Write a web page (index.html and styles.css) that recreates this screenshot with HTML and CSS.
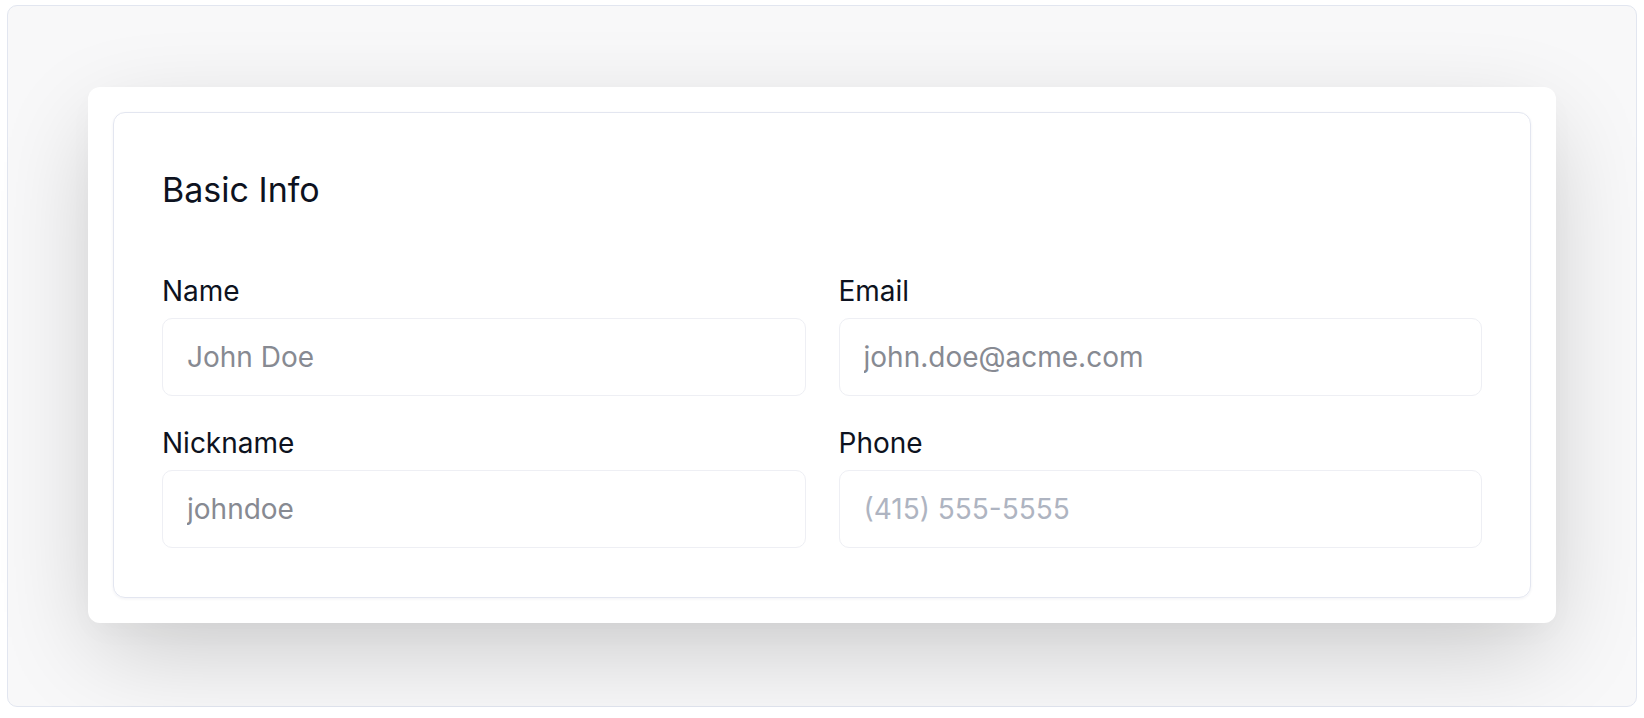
FILE: index.html
```html
<!DOCTYPE html>
<html lang="en">
<head>
<meta charset="utf-8">
<title>Basic Info</title>
<link rel="stylesheet" href="styles.css">
</head>
<body>
<div class="frame">
  <div class="card">
    <section class="panel">
      <h2 class="title">Basic Info</h2>
      <div class="grid">
        <label class="field">
          <span class="label">Name</span>
          <input class="input" type="text" placeholder="John Doe">
        </label>
        <label class="field">
          <span class="label">Email</span>
          <input class="input" type="email" placeholder="john.doe@acme.com">
        </label>
        <label class="field">
          <span class="label">Nickname</span>
          <input class="input" type="text" placeholder="johndoe">
        </label>
        <label class="field">
          <span class="label">Phone</span>
          <input class="input input-phone" type="tel" placeholder="(415) 555-5555">
        </label>
      </div>
    </section>
  </div>
</div>
</body>
</html>
```

FILE: styles.css
```css
* { box-sizing: border-box; }

html, body {
  margin: 0;
  padding: 0;
  background: #ffffff;
  font-family: Inter, "Noto Sans", "Liberation Sans", sans-serif;
  color: #0d1220;
}

.frame {
  margin: 5px 7px 0 7px;
  width: 1630px;
  height: 702px;
  border: 1px solid #e2e6f0;
  border-radius: 10px;
  background: #f8f8f9;
  display: flex;
  align-items: center;
  justify-content: center;
}

.card {
  width: 1468px;
  padding: 25px;
  background: #ffffff;
  border-radius: 12px;
  box-shadow: 0 32px 100px -10px rgba(0, 0, 0, 0.2), 0 10px 30px rgba(0, 0, 0, 0.02);
  margin-top: -2px;
}

.panel {
  border: 1px solid #e3e6f0;
  border-radius: 12px;
  padding: 57px 48px 49px 48px;
  box-shadow: 0 1px 3px rgba(30, 40, 80, 0.06);
}

.title {
  margin: 0 0 65px 0;
  font-size: 34px;
  line-height: 40px;
  font-weight: 400;
  color: #0d1220;
}

.grid {
  display: grid;
  grid-template-columns: 1fr 1fr;
  column-gap: 33px;
  row-gap: 31px;
}

.field {
  display: flex;
  flex-direction: column;
  gap: 11px;
}

.label {
  font-size: 28px;
  line-height: 32px;
  font-weight: 400;
  color: #0d1220;
}

.input {
  height: 78px;
  width: 100%;
  border: 1px solid #eeeff4;
  border-radius: 10px;
  padding: 0 24px;
  font-family: inherit;
  font-size: 28px;
  color: #0d1220;
  background: #ffffff;
  outline: none;
}

.input::placeholder {
  color: #878a92;
  opacity: 1;
}

.input-phone::placeholder {
  color: #aeb4c1;
}
```
